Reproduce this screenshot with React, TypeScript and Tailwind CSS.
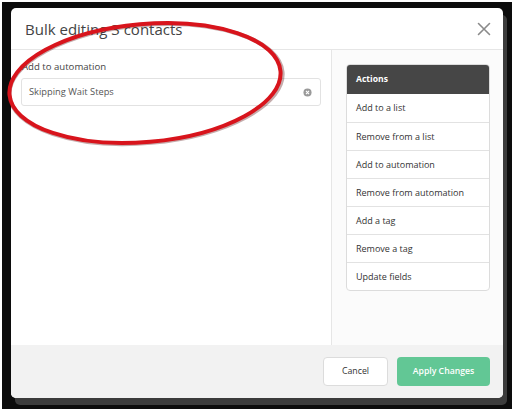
import React from "react";

const actions = [
  "Add to a list",
  "Remove from a list",
  "Add to automation",
  "Remove from automation",
  "Add a tag",
  "Remove a tag",
  "Update fields",
];

export default function App() {
  return (
    <div
      className="w-[514px] h-[411px] bg-white p-[2px] overflow-hidden"
      style={{ fontFamily: '"Open Sans", "Liberation Sans", sans-serif' }}
    >
      <div className="relative w-full h-full bg-[#0c0c0c] pt-[6px] pl-[9px] pr-[9px] pb-[11px]">
        <div className="relative flex flex-col w-full h-full bg-white rounded-[5px] shadow-[4px_7px_0_#3c3c3c] overflow-hidden">
          {/* header */}
          <div className="flex items-center justify-between h-[42px] shrink-0 border-b border-[#e6e6e6] pl-[14px] pr-[12px]">
            <div className="text-[15px] text-[#444] leading-none pt-[2px]">Bulk editing 3 contacts</div>
            <svg width="14" height="14" viewBox="0 0 14 14" className="mt-[1px]">
              <path d="M1.5 1.5 L12.5 12.5 M12.5 1.5 L1.5 12.5" stroke="#8a8a8a" strokeWidth="1.6" strokeLinecap="round" />
            </svg>
          </div>
          {/* body */}
          <div className="flex flex-1 min-h-0">
            <div className="w-[321px] shrink-0 border-r border-[#e6e6e6] pl-[11px] pr-[10px] pt-[10px]">
              <div className="text-[9.6px] text-[#444] leading-[14px]">Add to automation</div>
              <div className="mt-[4px] -ml-[1px] flex items-center justify-between h-[28px] border border-[#e2e2e2] rounded-[3px] pl-[7px] pr-[8px]">
                <span className="text-[9.3px] text-[#555]">Skipping Wait Steps</span>
                <svg width="9" height="9" viewBox="0 0 10 10">
                  <circle cx="5" cy="5" r="4.5" fill="#9a9a9a" />
                  <path d="M3.3 3.3 L6.7 6.7 M6.7 3.3 L3.3 6.7" stroke="#fff" strokeWidth="1.2" />
                </svg>
              </div>
            </div>
            <div className="flex-1 bg-[#fbfbfb] pl-[14px] pr-[13px] pt-[14px]">
              <div className="border border-[#dcdcdc] rounded-[4px] bg-white overflow-hidden">
                <div className="h-[29px] bg-[#464646] flex items-center pl-[9px] text-[8.6px] font-bold text-white">Actions</div>
                {actions.map((a, i) => (
                  <div
                    key={a}
                    className={
                      "h-[28px] flex items-center pl-[9px] text-[9px] text-[#333] " +
                      (i > 0 ? "border-t border-[#e2e2e2]" : "")
                    }
                  >
                    {a}
                  </div>
                ))}
              </div>
            </div>
          </div>
          {/* footer */}
          <div className="h-[53px] shrink-0 bg-[#f2f2f2] flex items-start justify-end gap-[9px] pt-[12px] pr-[13px]">
            <div className="w-[65px] h-[29px] bg-white border border-[#dcdcdc] rounded-[4px] flex items-center justify-center text-[8.8px] text-[#333]">
              Cancel
            </div>
            <div className="w-[93px] h-[29px] bg-[#62c795] rounded-[4px] flex items-center justify-center text-[8.7px] font-semibold text-white">
              Apply Changes
            </div>
          </div>
        </div>
        {/* red annotation ellipse */}
        <svg className="absolute left-[-2px] top-[-2px] pointer-events-none" width="514" height="411" viewBox="0 0 514 411">
          <ellipse cx="146" cy="84" rx="137" ry="59" transform="rotate(-5 146 84)" fill="none" stroke="#5a1010" strokeOpacity="0.35" strokeWidth="4.2" />
          <ellipse cx="145" cy="83" rx="136" ry="59" transform="rotate(-5 145 83)" fill="none" stroke="#d8141c" strokeWidth="4" />
        </svg>
      </div>
    </div>
  );
}
